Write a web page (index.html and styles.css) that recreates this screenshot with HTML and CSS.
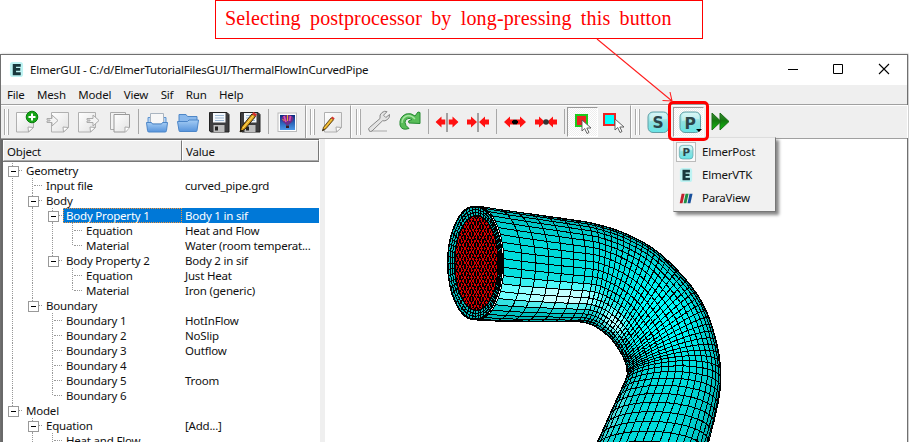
FILE: index.html
```html
<!DOCTYPE html>
<html lang="en">
<head>
<meta charset="utf-8">
<title>ElmerGUI</title>
<link rel="stylesheet" href="styles.css">
</head>
<body>
<svg class="defs" width="0" height="0">
  <defs>
    <linearGradient id="paper" x1="0" y1="0" x2="1" y2="1"><stop offset="0" stop-color="#fff"/><stop offset="1" stop-color="#e2e2e2"/></linearGradient>
    <linearGradient id="blue" x1="0" y1="0" x2="0" y2="1"><stop offset="0" stop-color="#a4ccf4"/><stop offset="1" stop-color="#5794dc"/></linearGradient>
    <linearGradient id="teal" x1="0" y1="0" x2="0" y2="1"><stop offset="0" stop-color="#c8f4f4"/><stop offset=".5" stop-color="#8ce0e0"/><stop offset="1" stop-color="#66e4e6"/></linearGradient>
    <linearGradient id="green" x1="0" y1="0" x2="0" y2="1"><stop offset="0" stop-color="#3a8a35"/><stop offset=".45" stop-color="#147a10"/><stop offset="1" stop-color="#10c010"/></linearGradient>
    <linearGradient id="sky" x1="0" y1="0" x2="0" y2="1"><stop offset="0" stop-color="#0a2a80"/><stop offset="1" stop-color="#4a98e8"/></linearGradient>
    <symbol id="page" viewBox="0 0 24 24"><path d="M1.5 2.5h17v14.500l-5 5h-12z" fill="url(#paper)" stroke="#b0b0b0"/><path d="M13.500 22l-.5-5 5.500.5z" fill="#fff" stroke="#aaa"/></symbol>
    <symbol id="disk" viewBox="0 0 24 24"><path d="M2.500 2.500h17.500l2 2v17.500h-18l-1.500-1z" fill="#3d3d3f" stroke="#222"/><path d="M6 3h12.500v9.500H6z" fill="#f4f8fc"/><path d="M8 5.500h9M8 8h9M8 10.500h9" stroke="#9db8d4"/><path d="M6.500 15h11v7h-11z" fill="#bdbdbd"/><path d="M8 16.500h3v4H8z" fill="#222"/></symbol>
    <symbol id="pencil" viewBox="0 0 24 24"><path d="M2 22l1.500-5L14 4l3.500 2.500L7 19z" fill="#e0a31c" stroke="#30220a"/><path d="M5 18L15.500 5.500" stroke="#ffe06a"/><path d="M14 4l1.500-2 3.500 2.500-1.500 2z" fill="#d8332c"/><path d="M2 22l.8-2.500L4.500 21z" fill="#111"/></symbol>
    <symbol id="cursor" viewBox="0 0 12 16"><path d="M1 1v11l2.700-2.500L6 14.500l2-1L5.800 9H10z" fill="#fff" stroke="#555" stroke-width=".9"/></symbol>
    <symbol id="tile" viewBox="0 0 24 24"><rect x="2" y="2" width="20.500" height="20.500" rx="5" fill="url(#teal)" stroke="#5f9ea5"/><path d="M4 11V7q0-4 4-4h9q4 0 4 4v2Q12 9 4 11z" fill="#fff" opacity=".35"/></symbol>
    <symbol id="arrow" viewBox="0 0 10 12"><path d="M10 6L4 .5v3H0v5h4v3z" fill="#f11"/></symbol>
    <symbol id="elmer" viewBox="0 0 16 16"><rect x="1" width="14" height="16" rx="3" fill="#bdf3f3"/><path d="M4 2h8.500v3h-5v1.500h4.500v2.700H7.500V11h5v3H4z" fill="#17383d"/></symbol>
  </defs>
</svg>

<div class="callout">Selecting postprocessor by long-pressing this button</div>

<div class="window">
  <header class="titlebar">
    <svg class="app-icon"><use href="#elmer"/></svg>
    <span class="title">ElmerGUI - C:/d/ElmerTutorialFilesGUI/ThermalFlowInCurvedPipe</span>
    <svg class="controls" viewBox="0 0 102 12"><path d="M0 6.500h10" stroke="#000" shape-rendering="crispEdges"/><path d="M45.500 1.500h9v9h-9z" fill="none" stroke="#000"/><path d="M91 1l10 10M101 1l-10 10" stroke="#000" stroke-width="1.100"/></svg>
  </header>
  <nav class="menubar"><span>File</span><span>Mesh</span><span>Model</span><span>View</span><span>Sif</span><span>Run</span><span>Help</span></nav>

  <div class="toolbars">
    <div class="toolbar tb-file">
      <i class="grip"></i>
      <button><svg viewBox="0 0 24 24"><use href="#page"/><circle cx="17" cy="7" r="5.800" fill="#16a516" stroke="#087d0c"/><path d="M17 3.500v7M13.500 7h7" stroke="#fff" stroke-width="2"/></svg></button>
      <button><svg viewBox="0 0 24 24"><g transform="translate(4)"><use href="#page" width="24" height="24"/></g><path d="M1 8.500h5V5l6 5.500L6 16v-3.500H1v-1.500h3v-1H1z" fill="#f4f4f4" stroke="#aaa"/></svg></button>
      <button><svg viewBox="0 0 24 24"><use href="#page"/><path d="M10 8.500h6V5l6 5.500L16 16v-3.500h-6v-1.500h3v-1h-3z" fill="#f4f4f4" stroke="#aaa"/></svg></button>
      <button><svg viewBox="0 0 24 24"><path d="M2.500 2.500h15v17h-15z" fill="#f3f3f3" stroke="#aaa"/><path d="M6 4.500h15.500v13l-4 4.500H6z" fill="url(#paper)" stroke="#999"/><path d="M17 22v-5l4.500.5" fill="#fff" stroke="#aaa"/></svg></button>
      <i class="sep"></i>
      <button><svg viewBox="0 0 24 24"><path d="M3 13V7.500h18V13" fill="#b6d5f6" stroke="#5e94d0"/><path d="M5.500 14V3.500h13V14z" fill="#f7f7f7" stroke="#a9b4c0"/><path d="M1.500 12.500h5l1 1.500h9l1-1.500h5l-1 8q0 1.500-1.500 1.500H4q-1.500 0-1.500-1.500z" fill="url(#blue)" stroke="#4c86c8"/></svg></button>
      <button><svg viewBox="0 0 24 24"><path d="M3 14V4.500h7l1.500 2H21V14" fill="#8bb9ec" stroke="#4f87c7"/><path d="M1.500 11.500h10l1.500-1.500h9.500l-1.500 10.500q0 1-1 1H4q-1 0-1-1z" fill="url(#blue)" stroke="#4c86c8"/></svg></button>
      <button><svg viewBox="0 0 24 24"><use href="#disk"/></svg></button>
      <button><svg viewBox="0 0 24 24"><use href="#disk"/><use href="#pencil"/></svg></button>
      <i class="sep"></i>
      <button><svg viewBox="0 0 24 24"><rect x="3" y="3" width="18.500" height="18.500" fill="#fff" stroke="#bbb"/><path d="M5 5h15v15H5z" fill="url(#sky)"/><path d="M6.500 8.500Q7 5 12.500 5t6 3.500q-.5 3-5 6.500h-2q-5-4-5-6.500z" fill="#6b2f88"/><path d="M9 6l2 6M15.500 6l-1 5" stroke="#e04bb0" stroke-width="1.800"/><path d="M12.500 5v6M7.500 9l2 2" stroke="#e9a035"/><path d="M11 15.500h3v2.500h-3z" fill="#3a1a20"/></svg></button>
    </div>
    <div class="toolbar tb-sif">
      <i class="grip"></i>
      <button><svg viewBox="0 0 24 24"><use href="#page" x="2"/><g transform="translate(0 5) scale(.72)"><use href="#pencil" width="24" height="24"/></g></svg></button>
    </div>
    <div class="toolbar tb-mesh">
      <i class="grip"></i>
      <button><svg viewBox="0 0 24 24"><path d="M2 21h18" stroke="#ccc" stroke-width="2"/><path d="M2 20.500q-1-2 .5-3L13 8.500q-.8-4 2-6t5-.8l-3.500 3.500 2.300 2.300 3.700-3q.5 3-2 5t-5 1.300L5 21q-1.500 1.200-3-.5z" fill="#e4e4e4" stroke="#888"/></svg></button>
      <button><svg viewBox="0 0 24 24"><path d="M2 15q-1-8 6-11 5-1.500 9 2l3-4 2 .5v11l-11-.5-.5-2 3.500-1.500q-3-2.500-6 0-2 2.500 0 6l3 3Q3.500 21 2 15z" fill="#58bd58" stroke="#268a32"/><path d="M4 13q0-6 6-7.500 4 0 7 3.500" fill="none" stroke="#a5e4a0" stroke-width="1.300"/></svg></button>
      <i class="sep"></i>
      <button><svg viewBox="0 0 24 24"><path d="M12 3v19" stroke="#555"/><use href="#arrow" width="10" height="12" transform="translate(13.500 6)"/><use href="#arrow" width="10" height="12" transform="translate(10.500 6) scale(-1 1)"/></svg></button>
      <button><svg viewBox="0 0 24 24"><path d="M12 3v19" stroke="#555"/><use href="#arrow" width="10" height="12" transform="translate(1 6)"/><use href="#arrow" width="10" height="12" transform="translate(23 6) scale(-1 1)"/></svg></button>
      <i class="sep"></i>
      <button><svg viewBox="0 0 24 24"><use href="#arrow" width="10" height="12" transform="translate(13 6)"/><use href="#arrow" width="10" height="12" transform="translate(11 6) scale(-1 1)"/><path d="M9 12h6" stroke="#000" stroke-width="2"/><circle cx="12" cy="12" r="2.600"/></svg></button>
      <button><svg viewBox="0 0 24 24"><use href="#arrow" width="10" height="12" transform="translate(1 6)"/><use href="#arrow" width="10" height="12" transform="translate(23 6) scale(-1 1)"/><circle cx="12" cy="12" r="2.800" fill="#333"/></svg></button>
      <i class="sep"></i>
      <button class="checked"><svg viewBox="0 0 24 24"><rect x="4" y="5" width="11" height="11" fill="#e22" stroke="#1cca1c" stroke-width="2"/><use href="#cursor" x="9" y="9" width="12" height="16"/></svg></button>
      <button><svg viewBox="0 0 24 24"><rect x="2" y="4" width="11" height="11" fill="#0ff" stroke="#e22" stroke-width="2"/><use href="#cursor" x="12" y="8" width="12" height="16"/></svg></button>
    </div>
    <div class="toolbar tb-solver">
      <i class="grip"></i>
      <button><svg viewBox="0 0 24 24"><use href="#tile"/><text class="glyph" x="12.200" y="18">S</text></svg></button>
      <div class="post">
        <button class="checked"><svg viewBox="0 0 24 24"><use href="#tile"/><text class="glyph" x="12.300" y="19">P</text></svg><b class="drop"></b></button>
        <div class="highlight"></div>
        <div class="popup">
          <div class="item current"><span class="slot"><svg viewBox="0 0 24 24"><use href="#tile"/><text class="glyph" x="12.300" y="18.500">P</text></svg></span>ElmerPost</div>
          <div class="item"><span class="slot"><svg viewBox="0 0 16 16"><use href="#elmer"/></svg></span>ElmerVTK</div>
          <div class="item"><span class="slot"><svg viewBox="0 0 16 16"><path d="M3 3h3.500L4 14H.8z" fill="#c2202e"/><path d="M7.500 3H11L8.500 14H5.200z" fill="#219047"/><path d="M12 3h3.500L13 14H9.700z" fill="#174f9c"/></svg></span>ParaView</div>
        </div>
      </div>
      <button><svg viewBox="0 0 24 24"><path d="M4 3l9 8.500L4 20zM12 3l9 8.500-9 8.500z" fill="url(#green)" stroke="#1c6f18"/></svg></button>
    </div>
  </div>

  <main class="content">
    <section class="tree">
      <div class="tree-head"><span>Object</span><span>Value</span></div>
      <div class="rows" id="rows"></div>
    </section>
    <div class="splitter"></div>
    <section class="viewport"><svg id="mesh" viewBox="325 139 582 303" width="582" height="303"></svg></section>
  </main>
</div>

<svg class="leader" viewBox="590 38 90 66"><path d="M597 39L672 101M662.500 100.500L672 101l-2-9" fill="none" stroke="#ff2020" stroke-width="1.100"/></svg>
<script src="app.js"></script>
</body>
</html>
```
FILE: styles.css
```css
* { box-sizing: border-box; }
body { margin: 0; width: 909px; height: 442px; overflow: hidden; background: #fff; color: #111; font: 11.5px/15px "Noto Sans", "Open Sans", sans-serif; letter-spacing: -0.2px; position: relative; }
.defs { position: absolute; }
.callout { width: 488px; height: 39px; margin: 0 0 15px 215px; padding: 0 0 0 9px; border: 1px solid #f00; color: #f00; font: 20px/35px "Liberation Serif", serif; letter-spacing: .15px; word-spacing: 4.100px; white-space: nowrap; }
.window { width: 908px; height: 400px; border: 1px solid #707070; border-bottom: 0; background: #efefef; box-shadow: 1px 0 2px #bbb; }
.titlebar { height: 30px; display: flex; align-items: center; background: #fff; padding: 0 17px 2px 8px; }
.app-icon { width: 15px; height: 15px; margin-right: 6px; }
.title { flex: 1; white-space: nowrap; letter-spacing: -0.22px; }
.controls { width: 102px; height: 12px; }
.menubar { height: 19px; padding: 2px 0 0 6px; display: flex; gap: 12.500px; }
.toolbars { height: 35px; display: flex; border-top: 1px solid #a0a0a0; border-bottom: 1px solid #a0a0a0; }
.toolbar { display: flex; border-top: 1px solid #fff; border-right: 1px solid #a0a0a0; padding-left: 3px; box-shadow: 1px 0 #fff; }
.tb-file { width: 305px; }
.tb-sif { width: 45px; padding-left: 4px; }
.tb-mesh { width: 280px; padding-left: 5px; }
.tb-solver { flex: 1; border-right: 0; padding-left: 4px; }
.grip { width: 5px; height: 26px; margin: 3px 2px 0 0; border: solid #aaa; border-width: 0 1px; background: linear-gradient(90deg, #fff 1px, #efefef 1px 2px, #fff 2px); }
.sep { width: 1px; height: 25px; margin: 3px 2px 0 3px; background: #a8a8a8; }
button { appearance: none; width: 31px; height: 31px; padding: 1px 0 0 4px; margin: 0; border: 0; background: none; display: block; position: relative; flex: none; }
button svg { display: block; width: 24px; height: 24px; }
button.checked { height: 30px; margin-top: 1px; border: 1px solid #999; border-right-color: #fff; border-bottom-color: #fff; background: repeating-conic-gradient(#fff 0 25%, #eee 0 50%) 0 0 / 2px 2px; padding: 0 0 0 4px; }
.glyph { font: bold 15.500px "DejaVu Sans", sans-serif; text-anchor: middle; fill: #2c464b; }
.post { position: relative; z-index: 3; }
.drop { position: absolute; right: 1px; bottom: 4px; border: solid transparent; border-width: 3px 3px 0; border-top-color: #000; }
.highlight { position: absolute; left: -5px; top: -5px; width: 41px; height: 40px; border: 3px solid #f00; border-radius: 5px; z-index: 2; }
.popup { position: absolute; left: 0; top: 31px; width: 103px; height: 75px; padding: 2px 1px 0 2px; background: #f1f1f1; border: 1px solid #ddd; border-right-color: #777; border-bottom-color: #777; box-shadow: 3px 3px 3px #888; }
.item { height: 23px; display: flex; align-items: center; gap: 6px; white-space: nowrap; }
.slot { width: 20px; height: 20px; display: flex; align-items: center; justify-content: center; }
.slot svg { width: 14px; height: 14px; }
.current .slot { border: 1px solid #bbb; background: #fafafa; }
.current .slot svg { width: 16px; height: 16px; }
.content { display: flex; height: 304px; background: #fff; }
.tree { width: 318px; border: solid #696969; border-width: 1px 0 0 2px; overflow: hidden; }
.tree-head { display: flex; height: 22px; background: #efefef; border-bottom: 1px solid #777; }
.tree-head span { width: 179px; padding: 3px 0 0 3px; border: 1px solid #fff; border-right-color: #777; border-bottom-color: #aaa; }
.tree-head span:last-child { width: 137px; }
.rows { padding-top: 1px; }
.row { display: flex; height: 15px; white-space: nowrap; }
.guide { width: 20px; flex: none; position: relative; left: -1px; }
.guide.line { background: repeating-linear-gradient(#999 0 1px, transparent 1px 2px) 10px 0 / 1px 100% no-repeat; }
.guide.half { background-size: 1px 8px; }
.guide.stub::before { content: ""; position: absolute; left: 12px; top: 7px; width: 8px; border-top: 1px dotted #999; }
.guide.box::after { content: ""; position: absolute; left: 6px; top: 3px; width: 9px; height: 9px; border: 1px solid #999; background: linear-gradient(#000, #000) center / 5px 1px no-repeat #fff; }
.guide.box::before { left: 16px; width: 4px; }
.name { flex: 1; padding-left: 3px; }
.value { width: 137px; padding-left: 3px; overflow: hidden; }
.selected .name, .selected .value { background: #0078d7; color: #fff; }
.selected .name { outline: 1px dotted #f29238; outline-offset: -1px; }
.splitter { width: 6px; background: linear-gradient(90deg, #fff 1px, #efefef 1px); }
.viewport { flex: 1; overflow: hidden; }
.viewport svg { display: block; }
.leader { position: absolute; left: 590px; top: 38px; width: 90px; height: 66px; z-index: 5; }
```
FILE: app.js
```js
// Tree rows: guide codes, name, value. b=box with half stem, B=box with full stem, l=line t=tee e=elbow s=space
const tree = [
  ['b', 'Geometry', ''],
  ['lt', 'Input file', 'curved_pipe.grd'],
  ['lB', 'Body', ''],
  ['llB', 'Body Property 1', 'Body 1 in sif', true],
  ['lllt', 'Equation', 'Heat and Flow'],
  ['llle', 'Material', 'Water (room temperat...'],
  ['llb', 'Body Property 2', 'Body 2 in sif'],
  ['llst', 'Equation', 'Just Heat'],
  ['llse', 'Material', 'Iron (generic)'],
  ['lb', 'Boundary', ''],
  ['lst', 'Boundary 1', 'HotInFlow'],
  ['lst', 'Boundary 2', 'NoSlip'],
  ['lst', 'Boundary 3', 'Outflow'],
  ['lst', 'Boundary 4', ''],
  ['lst', 'Boundary 5', 'Troom'],
  ['lse', 'Boundary 6', ''],
  ['b', 'Model', ''],
  ['sB', 'Equation', '[Add...]'],
  ['slt', 'Heat and Flow', ''],
];
const kinds = { b: 'box stub line half', B: 'box stub line', l: 'line', t: 'line stub', e: 'line half stub', s: '' };
document.getElementById('rows').innerHTML = tree.map(([g, n, v, sel]) =>
  `<div class="row${sel ? ' selected' : ''}">` + [...g].map((c, i) => `<span class="guide ${i === 2 && g.length === 4 && c === 'l' ? 'line' : kinds[c]}"></span>`).join('') +
  `<span class="name">${n}</span><span class="value">${v}</span></div>`).join('');

// Pipe stations: position, outer edge x/y, inner edge x/y, bulge of the cross-section
const stations = [
  [0, 477, 206, 477, 320, 27], [1, 496, 209, 494, 321, 27], [6, 574, 220, 566, 322, 15],
  [8, 592, 223, 580, 322, 12], [12, 622, 232, 594, 326, 8], [17, 654, 249, 609, 337, 5],
  [22, 682, 275, 619, 350, 0], [27, 703, 304, 625, 362, -4], [32, 716, 340, 627, 372, -9],
  [37, 721, 378, 625, 382, -14], [41, 716, 413, 613, 408, -17], [48, 698, 480, 581, 480, -19],
];
const N = 21, RINGS = 47;
function station(k) {
  let i = 0;
  while (i < stations.length - 2 && k > stations[i + 1][0]) i++;
  const p0 = stations[Math.max(0, i - 1)], p1 = stations[i], p2 = stations[i + 1], p3 = stations[Math.min(stations.length - 1, i + 2)];
  const h = p2[0] - p1[0], t = (k - p1[0]) / h;
  return [1, 2, 3, 4, 5].map(c => {
    const m1 = (p2[c] - p0[c]) / (p2[0] - p0[0]) * h, m2 = (p3[c] - p1[c]) / (p3[0] - p1[0]) * h;
    return (2*t**3 - 3*t*t + 1) * p1[c] + (t**3 - 2*t*t + t) * m1 + (3*t*t - 2*t**3) * p2[c] + (t**3 - t*t) * m2;
  });
}
function point(k, j) {
  const [ox, oy, ix, iy, b] = station(k), a = Math.PI * j / N;
  const dx = (ox - ix) / 2, dy = (oy - iy) / 2, len = Math.hypot(dx, dy);
  const c = Math.cos(a), s = Math.sin(a) * b / len;
  return [(ox + ix) / 2 + dx * c - dy * s, (oy + iy) / 2 + dy * c + dx * s];
}
function color(k, j) {
  const u = (j + .5) / N, edge = Math.sin(Math.PI * u);
  const bend = Math.exp(-(((k - 24) / 9) ** 2));
  const base = 120 + 100 * Math.pow(edge, .5) + 40 * bend * edge;
  const shine = Math.exp(-(((u - .67) / .075) ** 2)) * Math.exp(-(((k - 4) / 5) ** 2)) * 225
    + Math.exp(-(((u - .76) / .09) ** 2)) * Math.exp(-(((k - 15) / 4) ** 2)) * 190
    + Math.exp(-(((u - .82) / .08) ** 2)) * Math.exp(-(((k - 42) / 3) ** 2)) * 80;
  const g = Math.min(255, base + shine * .4);
  return `rgb(${Math.min(240, shine) | 0},${g | 0},${g | 0})`;
}
let out = '<g stroke="#000" stroke-width="1" shape-rendering="crispEdges">';
for (let k = RINGS - 1; k >= 0; k--)
  for (let j = 0; j < N; j++)
    out += `<polygon points="${[point(k, j), point(k + 1, j), point(k + 1, j + 1), point(k, j + 1)].map(p => p.map(v => v.toFixed(1))).join(' ')}" fill="${color(k, j)}"/>`;
// Pipe mouth: cyan wall around the red core
out += '<ellipse cx="475" cy="263" rx="27.500" ry="57" fill="#0bb"/>';
for (let r = 0; r < 4; r++)
  out += `<ellipse cx="${475 + r * .5}" cy="263" rx="${27 - r * 1.6}" ry="${56 - r * 2.8}" fill="none"/>`;
for (let a = 0; a < 56; a++) {
  const c = Math.cos(a * Math.PI / 28), s = Math.sin(a * Math.PI / 28);
  out += `<path d="M${476 + 21 * c} ${263 + 46 * s}L${475 + 27 * c} ${263 + 57 * s}"/>`;
}
out += '<ellipse cx="476.500" cy="263" rx="21.500" ry="47" fill="#d80000"/>';
// Core grid: two families of bent mesh lines
const core = (x, y) => `${(476.5 + 21 * x).toFixed(1)} ${(263 + 46 * y).toFixed(1)}`;
const M = 9;
for (let i = -M + 1; i < M; i++) {
  const v = i / M, w = Math.sqrt(1 - v * v);
  let a = '', b = '';
  for (let t = -8; t <= 8; t++) {
    const q = t / 8 * w, r = Math.SQRT1_2;
    a += (t > -8 ? 'L' : 'M') + core((q - v) * r, (q + v) * r);
    b += (t > -8 ? 'L' : 'M') + core((q + v) * r, (v - q) * r);
  }
  out += `<path d="${a}" fill="none"/><path d="${b}" fill="none"/>`;
}
document.getElementById('mesh').innerHTML = out + '</g>';
```
